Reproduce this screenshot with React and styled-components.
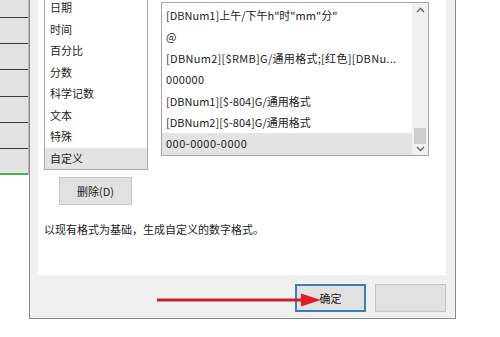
import styled, { createGlobalStyle } from 'styled-components';

const GlobalStyle = createGlobalStyle`
  html, body {
    margin: 0;
    padding: 0;
    background: #fff;
  }
  body {
    font-family: "Noto Sans CJK SC", "Microsoft YaHei", sans-serif;
    font-size: 11px;
    color: #222;
  }
`;

const Page = styled.div`
  position: relative;
  display: flex;
  width: 500px;
  height: 337px;
  overflow: hidden;
  background: #fff;
`;

const Sheet = styled.div`
  width: 28px;
  display: flex;
  flex-direction: column;
  border-right: 1px solid #b8b8b8;
  align-self: flex-start;
`;

const SheetRow = styled.div`
  height: ${(p) => p.h}px;
  background: #e3e3e3;
  border-bottom: 1px solid ${(p) => (p.green ? '#4caf50' : '#3a3a3a')};
  ${(p) => p.green && 'border-bottom-width: 2px;'}
`;

const Dialog = styled.div`
  width: 427px;
  height: 319px;
  display: flex;
  flex-direction: column;
  background: #f0f0f0;
  border: 1px solid #8a8a8a;
  border-top: none;
  box-sizing: border-box;
  padding: 0 9px 0 8px;
`;

const Panel = styled.div`
  height: 275px;
  background: #fff;
  overflow: hidden;
  display: flex;
  flex-direction: column;
  padding-left: 6px;
`;

const Lists = styled.div`
  display: flex;
  gap: 13px;
`;

const CategoryList = styled.div`
  width: 104px;
  height: 175px;
  margin-top: -5px;
  border: 1px solid #a8a8a8;
  box-sizing: border-box;
  padding-top: 1px;
  display: flex;
  flex-direction: column;
`;

const Item = styled.div`
  height: 21.5px;
  line-height: 21.5px;
  padding-left: 5px;
  white-space: nowrap;
  overflow: hidden;
  text-overflow: ellipsis;
  background: ${(p) => (p.selected ? '#e3e3e3' : 'transparent')};
`;

const FormatBox = styled.div`
  width: 268px;
  height: 154px;
  margin-top: 2px;
  border: 1px solid #a8a8a8;
  box-sizing: border-box;
  display: flex;
`;

const FormatItems = styled.div`
  flex: 1;
  min-width: 0;
  padding-top: 2px;
  display: flex;
  flex-direction: column;
`;

const FormatItem = styled(Item)`
  height: 21.4px;
  line-height: 21.4px;
  padding-left: 4px;
  letter-spacing: ${(p) => p.spacing || 0}px;
`;

const Scrollbar = styled.div`
  width: 16px;
  background: #f0f0f0;
  display: flex;
  flex-direction: column;
  align-items: center;
  justify-content: space-between;
  padding: 4px 0 3px;
  box-sizing: border-box;
`;

const Track = styled.div`
  flex: 1;
  width: 12px;
  display: flex;
  flex-direction: column;
  justify-content: flex-end;
  padding-bottom: 2px;
`;

const Thumb = styled.div`
  height: 16px;
  background: #cdcdcd;
`;

const Arrow = ({ up }) => (
  <svg width="9" height="6" viewBox="0 0 9 6">
    <path
      d={up ? 'M1 5 L4.5 1.5 L8 5' : 'M1 1 L4.5 4.5 L8 1'}
      fill="none"
      stroke="#606060"
      strokeWidth="1.3"
    />
  </svg>
);

const Button = styled.button`
  font-family: inherit;
  font-size: 11px;
  color: #222;
  width: ${(p) => p.w || 71}px;
  height: 28px;
  padding: 0;
  background: #e1e1e1;
  border: ${(p) => (p.primary ? '2px solid #3d7fb4' : '1px solid #c4c4c4')};
  box-sizing: border-box;
`;

const DeleteButton = styled(Button)`
  margin: 7px 0 0 15px;
  width: 73px;
  align-self: flex-start;
`;

const Hint = styled.div`
  margin-top: 17px;
  line-height: 14px;
`;

const Footer = styled.div`
  flex: 1;
  display: flex;
  justify-content: flex-end;
  align-items: flex-start;
  gap: 9px;
  padding-top: 9px;
`;

const RedArrow = styled.svg`
  position: absolute;
  left: 155px;
  top: 292px;
`;

const categories = ['日期', '时间', '百分比', '分数', '科学记数', '文本', '特殊', '自定义'];

const formats = [
  { text: '[DBNum1]上午/下午h"时"mm"分"' },
  { text: '@' },
  { text: '[DBNum2][$RMB]G/通用格式;[红色][DBNu...', spacing: 0.3 },
  { text: '000000', spacing: 0.3 },
  { text: '[DBNum1][$-804]G/通用格式' },
  { text: '[DBNum2][$-804]G/通用格式' },
  { text: '000-0000-0000', spacing: 0.5 },
];

const App = () => {
  return (
    <Page>
      <GlobalStyle />
      <Sheet>
        <SheetRow h={17} />
        <SheetRow h={25} />
        <SheetRow h={25} />
        <SheetRow h={26} />
        <SheetRow h={25} />
        <SheetRow h={25} />
        <SheetRow h={24} green />
      </Sheet>
      <Dialog>
        <Panel>
          <Lists>
            <CategoryList>
              {categories.map((c, i) => (
                <Item key={c} selected={i === categories.length - 1}>{c}</Item>
              ))}
            </CategoryList>
            <FormatBox>
              <FormatItems>
                {formats.map((f, i) => (
                  <FormatItem key={f.text} spacing={f.spacing} selected={i === formats.length - 1}>
                    {f.text}
                  </FormatItem>
                ))}
              </FormatItems>
              <Scrollbar>
                <Arrow up />
                <Track>
                  <Thumb />
                </Track>
                <Arrow />
              </Scrollbar>
            </FormatBox>
          </Lists>
          <DeleteButton>删除(D)</DeleteButton>
          <Hint>以现有格式为基础，生成自定义的数字格式。</Hint>
        </Panel>
        <Footer>
          <Button primary>确定</Button>
          <Button />
        </Footer>
      </Dialog>
      <RedArrow width="170" height="16" viewBox="0 0 170 16">
        <line x1="2" y1="8" x2="150" y2="8" stroke="#c4232b" strokeWidth="3" />
        <polygon points="146,1.5 166,8 146,14.5" fill="#e01e25" />
      </RedArrow>
    </Page>
  );
};

export default App;
